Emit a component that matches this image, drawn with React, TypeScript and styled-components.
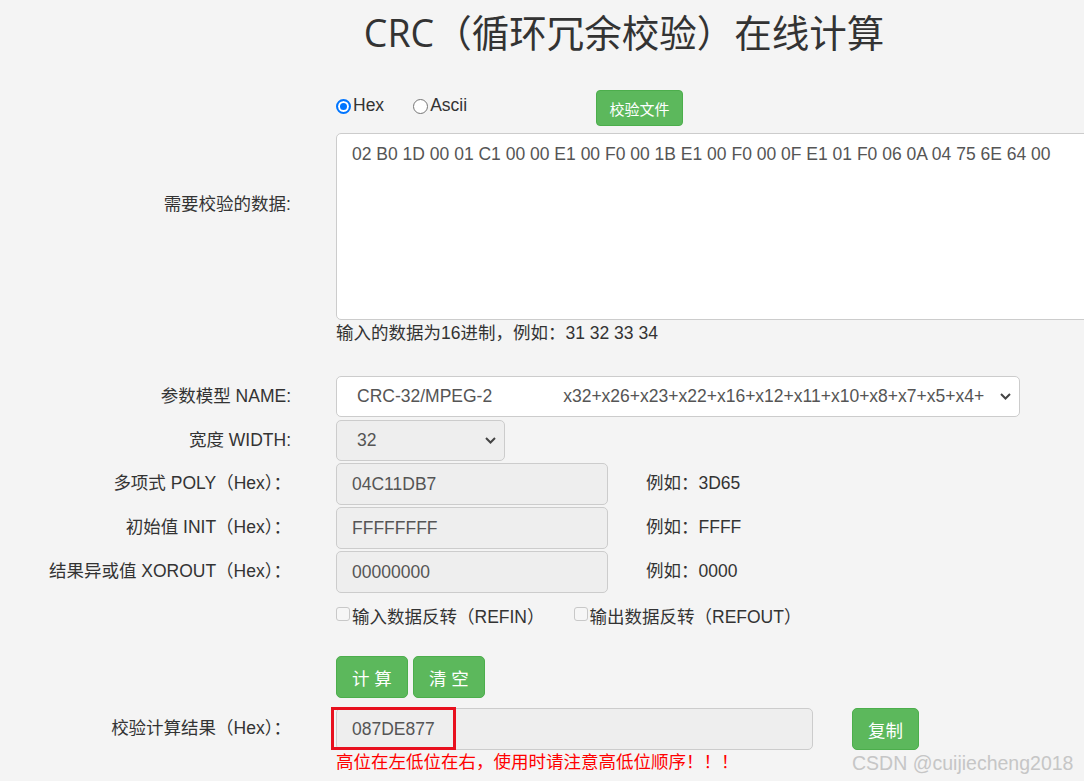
import * as React from 'react'
import styled, { createGlobalStyle } from 'styled-components'

const GlobalStyle = createGlobalStyle`
  html, body {
    margin: 0;
    padding: 0;
    background: #f4f4f4;
    overflow: hidden;
  }
  body {
    font-family: "Liberation Sans", "Noto Sans CJK SC", sans-serif;
    font-size: 17.5px;
    line-height: 1.25;
    color: #333;
  }
`

const green = '#5cb85c'

const Chevron: React.FC = () => (
  <svg width="11" height="7" viewBox="0 0 11 7">
    <polyline points="1,1 5.5,5.5 10,1" fill="none" stroke="#444" strokeWidth="2" />
  </svg>
)

const App: React.FC = () => {
  const [mode, setMode] = React.useState<'hex' | 'ascii'>('hex')

  return (
    <Page>
      <GlobalStyle />
      <Header>CRC（循环冗余校验）在线计算</Header>

      <Form>
        <Row>
          <Label>需要校验的数据:</Label>
          <Field>
            <RadioLine>
              <RadioItem onClick={() => setMode('hex')}>
                <Radio checked={mode === 'hex'} />Hex
              </RadioItem>
              <RadioItem $gap={29} onClick={() => setMode('ascii')}>
                <Radio checked={mode === 'ascii'} />Ascii
              </RadioItem>
              <SmallButton>校验文件</SmallButton>
            </RadioLine>
            <DataArea defaultValue="02 B0 1D 00 01 C1 00 00 E1 00 F0 00 1B E1 00 F0 00 0F E1 01 F0 06 0A 04 75 6E 64 00" />
          </Field>
        </Row>
        <Row>
          <Label />
          <Hint>输入的数据为16进制，例如：31 32 33 34</Hint>
        </Row>

        <Row $top={31}>
          <Label>参数模型 NAME:</Label>
          <SelectBox $width={684}>
            <SelectText>
              <span>CRC-32/MPEG-2</span>
              <Poly>x32+x26+x23+x22+x16+x12+x11+x10+x8+x7+x5+x4+</Poly>
            </SelectText>
            <Chevron />
          </SelectBox>
        </Row>
        <Row $top={3}>
          <Label>宽度 WIDTH:</Label>
          <SelectBox $width={169} $muted>
            <SelectText>32</SelectText>
            <Chevron />
          </SelectBox>
        </Row>
        <Row $top={2}>
          <Label>多项式 POLY（Hex）：</Label>
          <Inline>
            <TextBox $width={272} readOnly value="04C11DB7" />
            <Example>例如：3D65</Example>
          </Inline>
        </Row>
        <Row $top={2}>
          <Label>初始值 INIT（Hex）：</Label>
          <Inline>
            <TextBox $width={272} readOnly value="FFFFFFFF" />
            <Example>例如：FFFF</Example>
          </Inline>
        </Row>
        <Row $top={2}>
          <Label>结果异或值 XOROUT（Hex）：</Label>
          <Inline>
            <TextBox $width={272} readOnly value="00000000" />
            <Example>例如：0000</Example>
          </Inline>
        </Row>

        <Row $top={13}>
          <Label />
          <Inline>
            <CheckItem>
              <CheckBox />输入数据反转（REFIN）
            </CheckItem>
            <CheckItem $gap={29}>
              <CheckBox />输出数据反转（REFOUT）
            </CheckItem>
          </Inline>
        </Row>

        <Row $top={28}>
          <Label />
          <Inline>
            <GreenButton>计 算</GreenButton>
            <GreenButton $gap={5}>清 空</GreenButton>
          </Inline>
        </Row>

        <Row $top={10}>
          <Label>校验计算结果（Hex）：</Label>
          <Inline>
            <ResultWrap>
              <TextBox $width={477} readOnly value="087DE877" />
              <Marker />
            </ResultWrap>
            <GreenButton $gap={39}>复制</GreenButton>
          </Inline>
        </Row>
        <Row>
          <Label />
          <Warning>高位在左低位在右，使用时请注意高低位顺序！！！</Warning>
        </Row>
      </Form>

      <Watermark>CSDN @cuijiecheng2018</Watermark>
    </Page>
  )
}

export default App

const Page = styled.div`
  position: relative;
  width: 1084px;
  height: 781px;
  overflow: hidden;
  padding-top: 12px;
  box-sizing: border-box;
`

const Header = styled.h1`
  width: 1248px;
  margin: 0;
  text-align: center;
  font-family: "Open Sans", "Noto Sans CJK SC", sans-serif;
  font-size: 37.5px;
  font-weight: 400;
  line-height: 42px;
  color: #333;
`

const Form = styled.div`
  margin-top: 36px;
  display: flex;
  flex-direction: column;
`

const Row = styled.div<{ $top?: number }>`
  display: grid;
  grid-template-columns: 291px 1fr;
  column-gap: 45px;
  align-items: center;
  margin-top: ${(p) => p.$top ?? 0}px;
`

const Label = styled.div`
  text-align: right;
  white-space: nowrap;
`

const Field = styled.div`
  display: flex;
  flex-direction: column;
`

const RadioLine = styled.div`
  display: flex;
  align-items: center;
  height: 36px;
`

const RadioItem = styled.label<{ $gap?: number }>`
  display: flex;
  align-items: center;
  margin-left: ${(p) => p.$gap ?? 0}px;
  margin-top: -4px;
  cursor: pointer;
`

const Radio = styled.span<{ checked: boolean }>`
  width: 15px;
  height: 15px;
  box-sizing: border-box;
  border-radius: 50%;
  margin-right: 2px;
  background: #fff;
  border: ${(p) => (p.checked ? '2px solid #0075ff' : '1px solid #767676')};
  box-shadow: ${(p) => (p.checked ? 'inset 0 0 0 2px #fff, inset 0 0 0 6px #0075ff' : 'none')};
`

const SmallButton = styled.button`
  margin-left: 129px;
  height: 36px;
  width: 87px;
  padding: 0;
  border: 1px solid #4cae4c;
  border-radius: 4px;
  background: ${green};
  color: #fff;
  font-family: "Noto Sans CJK SC", sans-serif;
  font-size: 15px;
`

const DataArea = styled.textarea`
  margin-top: 7px;
  width: 800px;
  height: 187px;
  box-sizing: border-box;
  padding: 8px 15px;
  border: 1px solid #ccc;
  border-radius: 5px;
  background: #fff;
  color: #555;
  font-family: "Liberation Sans", sans-serif;
  font-size: 17.5px;
  line-height: 25px;
  resize: none;
  outline: none;
`

const Hint = styled.div`
  margin-top: 2px;
  line-height: 23px;
`

const SelectBox = styled.div<{ $width: number; $muted?: boolean }>`
  width: ${(p) => p.$width}px;
  height: 41px;
  box-sizing: border-box;
  display: flex;
  align-items: center;
  padding: 0 8px 0 20px;
  border: 1px solid #ccc;
  border-radius: 5px;
  background: ${(p) => (p.$muted ? '#eee' : '#fff')};
  color: #555;
`

const SelectText = styled.div`
  flex: 1;
  display: flex;
  white-space: nowrap;
  overflow: hidden;
`

const Poly = styled.span`
  margin-left: 71px;
`

const Inline = styled.div`
  display: flex;
  align-items: center;
`

const TextBox = styled.input<{ $width: number }>`
  width: ${(p) => p.$width}px;
  height: 42px;
  box-sizing: border-box;
  padding: 0 15px;
  border: 1px solid #ccc;
  border-radius: 5px;
  background: #eee;
  color: #555;
  font-family: "Liberation Sans", sans-serif;
  font-size: 17.5px;
  outline: none;
`

const Example = styled.span`
  margin-left: 38px;
`

const CheckItem = styled.label<{ $gap?: number }>`
  display: flex;
  align-items: center;
  margin-left: ${(p) => p.$gap ?? 0}px;
  line-height: 22px;
`

const CheckBox = styled.span`
  width: 14px;
  height: 14px;
  box-sizing: border-box;
  margin-right: 2px;
  margin-top: -6px;
  border: 1px solid #c8c8c8;
  border-radius: 3px;
  background: #f6f6f6;
`

const GreenButton = styled.button<{ $gap?: number }>`
  margin-left: ${(p) => p.$gap ?? 0}px;
  height: 42px;
  padding: 0 15px;
  border: 1px solid #4cae4c;
  border-radius: 5px;
  background: ${green};
  color: #fff;
  font-family: "Liberation Sans", "Noto Sans CJK SC", sans-serif;
  font-size: 17.5px;
  white-space: pre;
`

const ResultWrap = styled.div`
  position: relative;
  display: flex;
`

const Marker = styled.div`
  position: absolute;
  left: -5px;
  top: -1px;
  width: 125px;
  height: 43px;
  box-sizing: border-box;
  border: 3px solid #e8101e;
  pointer-events: none;
`

const Warning = styled.div`
  color: #f00;
  line-height: 24px;
`

const Watermark = styled.div`
  position: absolute;
  left: 852px;
  top: 751px;
  font-family: "Liberation Sans", sans-serif;
  font-size: 19.5px;
  line-height: 24px;
  color: #c6c6c6;
  white-space: nowrap;
`
